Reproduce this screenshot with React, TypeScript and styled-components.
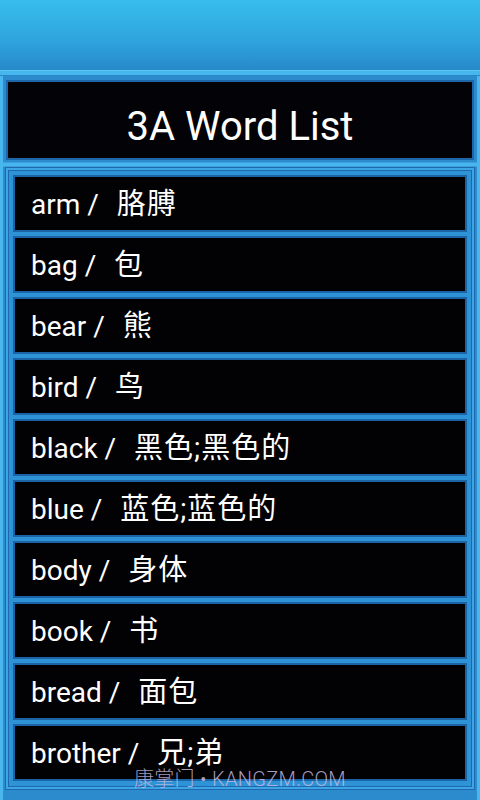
import React from "react";
import styled, { createGlobalStyle } from "styled-components";

const words: [string, string][] = [
  ["arm", "胳膊"],
  ["bag", "包"],
  ["bear", "熊"],
  ["bird", "鸟"],
  ["black", "黑色;黑色的"],
  ["blue", "蓝色;蓝色的"],
  ["body", "身体"],
  ["book", "书"],
  ["bread", "面包"],
  ["brother", "兄;弟"],
];

const GlobalStyle = createGlobalStyle`
  html, body {
    margin: 0;
    padding: 0;
    background: #2b8bcd;
  }
  body {
    font-family: Roboto, "Noto Sans CJK SC", sans-serif;
  }
`;

function App() {
  return (
    <>
      <GlobalStyle />
      <Page>
        <Header />
        <HeaderEdge />
        <Main>
          <TitleBox>3A Word List</TitleBox>
          <Divider />
          <ListFrame>
            {words.map(([en, zh]) => (
              <Row key={en}>
                <RowText>
                  {en} /{"  "}
                  <Zh>{zh}</Zh>
                </RowText>
              </Row>
            ))}
          </ListFrame>
        </Main>
        <Watermark>康掌门 • KANGZM.COM</Watermark>
      </Page>
    </>
  );
}

const Page = styled.div`
  position: relative;
  width: 480px;
  height: 800px;
  overflow: hidden;
  display: flex;
  flex-direction: column;
  background: #2b8bcd;
`;

const Header = styled.div`
  height: 70px;
  background: linear-gradient(to bottom, #37bdec 0%, #2fa6df 55%, #2789c9 100%);
`;

const HeaderEdge = styled.div`
  height: 6px;
  background: #46b7ee;
  border-top: 1px solid #5cc6f4;
  border-bottom: 1px solid #2a86c6;
  box-sizing: border-box;
`;

const Main = styled.div`
  flex: 1;
  display: flex;
  flex-direction: column;
  padding: 4px 3px 0 3px;
  border-left: 3px solid #4ab6ee;
  border-right: 3px solid #4ab6ee;
  box-sizing: border-box;
`;

const TitleBox = styled.div`
  height: 80px;
  box-sizing: border-box;
  background: #030206;
  border: 2px solid #1d66a8;
  color: #ffffff;
  font-size: 40px;
  display: flex;
  align-items: center;
  justify-content: center;
  padding-top: 12px;
`;

const Divider = styled.div`
  height: 8px;
  margin: 0 -3px;
  background: linear-gradient(
    to bottom,
    #2b8bcd 0px,
    #2b8bcd 2px,
    #48b6ee 3px,
    #48b6ee 6px,
    #2b8bcd 7px
  );
`;

const ListFrame = styled.div`
  display: flex;
  flex-direction: column;
  gap: 4px;
  padding: 5px 5px 6px 5px;
  border: 2px solid #3ca5e6;
  box-shadow: inset 0 0 0 1px #1e68ab, 0 0 0 1px #1e68ab;
  background: #2e93d6;
  margin-bottom: 8px;
`;

const Row = styled.div`
  height: 57px;
  box-sizing: border-box;
  background: #020104;
  border: 2px solid #1c63a6;
  display: flex;
  align-items: center;
  padding: 0 16px;
`;

const RowText = styled.span`
  color: #ffffff;
  font-size: 28px;
  white-space: pre;
  margin-top: -5px;
`;

const Zh = styled.span`
  font-size: 29px;
  letter-spacing: 1px;
  margin-left: 4px;
`;

const Watermark = styled.div`
  position: absolute;
  left: 0;
  right: 0;
  bottom: 8px;
  text-align: center;
  font-size: 20px;
  font-weight: 300;
  color: rgba(196, 184, 222, 0.85);
  letter-spacing: 0.3px;
  pointer-events: none;
`;

export default App;
